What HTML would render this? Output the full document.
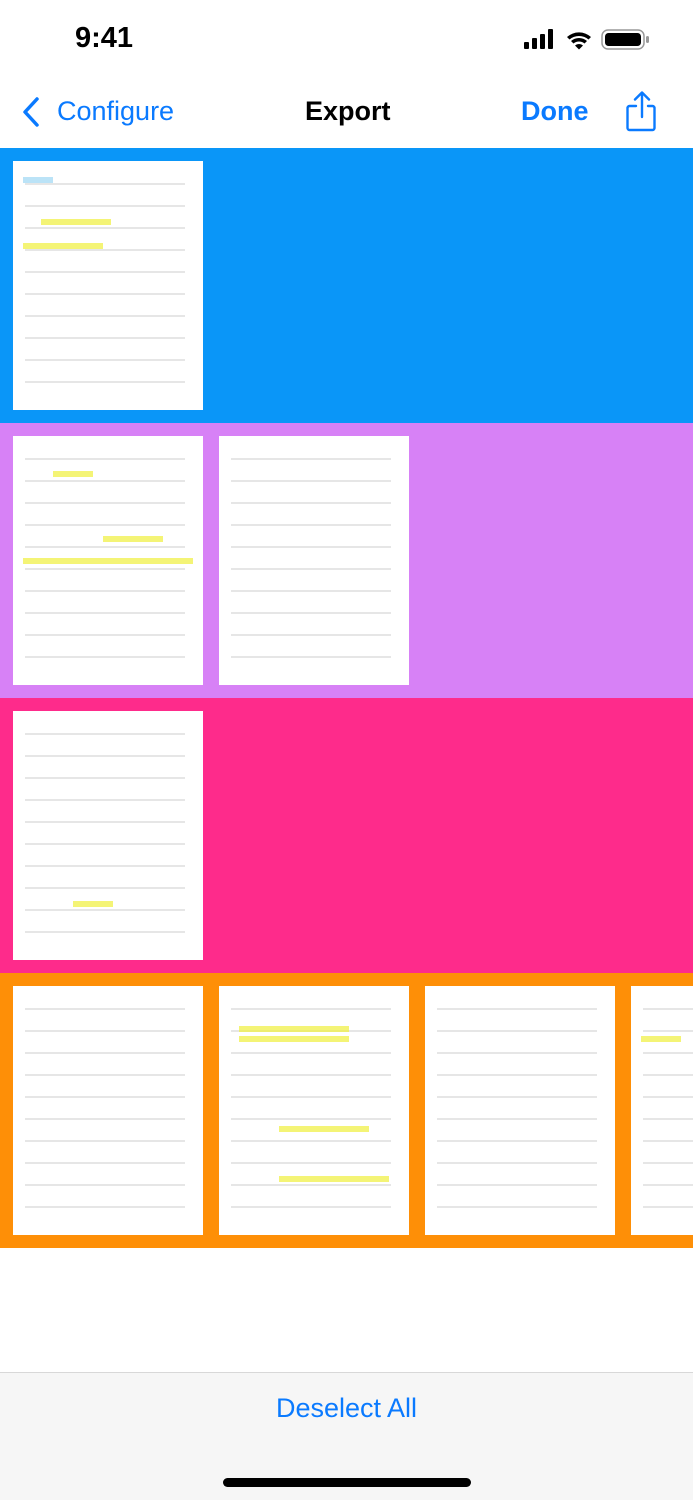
<!DOCTYPE html>
<html><head><meta charset="utf-8"><style>
*{margin:0;padding:0;box-sizing:border-box}
body{width:693px;height:1500px;background:#fff;font-family:"Liberation Sans",sans-serif;position:relative;overflow:hidden}
.abs{position:absolute}
.band{position:absolute;left:0;width:693px;height:275px}
.pg{position:absolute;top:13px;width:190px;height:249px;background:#fff;
background-image:repeating-linear-gradient(to bottom,transparent 0 12px,rgba(60,60,60,.13) 12px 14px,transparent 14px 22px);
background-size:160px 220px;background-position:12px 10px;background-repeat:no-repeat}
.hl{position:absolute;height:6px;background:rgba(240,240,60,.7)}
.hb{position:absolute;height:6px;background:rgba(120,200,240,.5)}
</style></head><body>
<!-- status bar -->
<div class="abs" style="left:75px;top:22px;font-size:29px;font-weight:bold;color:#000">9:41</div>
<svg class="abs" style="left:522px;top:28px" width="130" height="24" viewBox="0 0 130 24">
<rect x="2" y="14" width="5" height="7" rx="1"/><rect x="10" y="10" width="5" height="11" rx="1"/><rect x="18" y="6" width="5" height="15" rx="1"/><rect x="26" y="1" width="5" height="20" rx="1"/>
<path d="M45 9a18 18 0 0 1 24 0l-2.5 2.5a14.5 14.5 0 0 0-19 0z M49 13a12 12 0 0 1 16 0l-2.5 2.5a8.5 8.5 0 0 0-11 0z M53 17.5a6 6 0 0 1 8 0L57 21.5z"/>
<rect x="80" y="2" width="42" height="19" rx="6" fill="none" stroke="#000" stroke-width="1.5" opacity=".4"/>
<rect x="83" y="5" width="36" height="13" rx="3.5"/><rect x="124" y="8" width="3" height="7" rx="1.5" opacity=".4"/>
</svg>
<!-- nav -->
<svg class="abs" style="left:20px;top:96px" width="22" height="32" viewBox="0 0 22 32"><path d="M17 3L5 16l12 13" fill="none" stroke="#0a7aff" stroke-width="3.5" stroke-linecap="round" stroke-linejoin="round"/></svg>
<div class="abs" style="left:57px;top:96px;font-size:27px;color:#0a7aff">Configure</div>
<div class="abs" style="left:305px;top:96px;font-size:27px;font-weight:bold;color:#000">Export</div>
<div class="abs" style="left:521px;top:96px;font-size:27px;font-weight:bold;color:#0a7aff">Done</div>
<svg class="abs" style="left:624px;top:90px" width="36" height="42" viewBox="0 0 36 42"><path d="M12 16H5.5a2 2 0 0 0-2 2v20a2 2 0 0 0 2 2h23a2 2 0 0 0 2-2V18a2 2 0 0 0-2-2H24 M18 27V3 M11 9.5L18 2.5l7 7" fill="none" stroke="#0a7aff" stroke-width="2.4" stroke-linecap="round" stroke-linejoin="round"/></svg>
<!-- bands -->
<div class="band" style="top:148px;background:#0a96f8">
<div class="pg" style="left:13px"><div class="hb" style="left:10px;top:16px;width:30px"></div><div class="hl" style="left:28px;top:58px;width:70px"></div><div class="hl" style="left:10px;top:82px;width:80px"></div></div>
</div>
<div class="band" style="top:423px;background:#d781f6">
<div class="pg" style="left:13px"><div class="hl" style="left:40px;top:35px;width:40px"></div><div class="hl" style="left:90px;top:100px;width:60px"></div><div class="hl" style="left:10px;top:122px;width:170px"></div></div>
<div class="pg" style="left:219px"></div>
</div>
<div class="band" style="top:698px;background:#fe2b8b">
<div class="pg" style="left:13px"><div class="hl" style="left:60px;top:190px;width:40px"></div></div>
</div>
<div class="band" style="top:973px;background:#fe8f07">
<div class="pg" style="left:13px"></div>
<div class="pg" style="left:219px"><div class="hl" style="left:20px;top:40px;width:110px"></div><div class="hl" style="left:20px;top:50px;width:110px"></div><div class="hl" style="left:60px;top:140px;width:90px"></div><div class="hl" style="left:60px;top:190px;width:110px"></div></div>
<div class="pg" style="left:425px"></div>
<div class="pg" style="left:631px"><div class="hl" style="left:10px;top:50px;width:40px"></div></div>
</div>
<!-- bottom bar -->
<div class="abs" style="left:0;top:1372px;width:693px;height:128px;background:#f6f6f6;border-top:1px solid #d8d8d8"></div>
<div class="abs" style="left:0;top:1393px;width:693px;text-align:center;font-size:27px;color:#0a7aff">Deselect All</div>
<div class="abs" style="left:223px;top:1478px;width:248px;height:9px;border-radius:5px;background:#000"></div>
</body></html>
